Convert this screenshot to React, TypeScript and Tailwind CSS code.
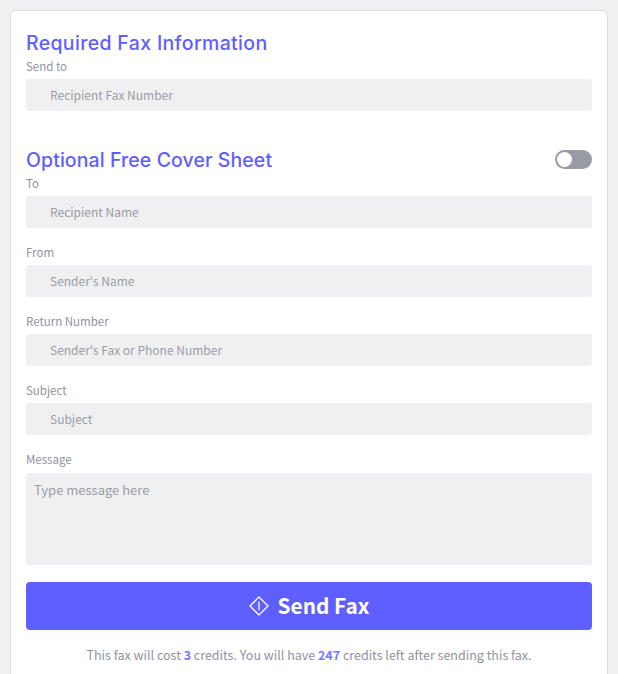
import React from "react";

const body = "font-['Noto_Sans_CJK_SC','Liberation_Sans',sans-serif]";

function Field({ label, placeholder }: { label: string; placeholder: string }) {
  return (
    <div className="flex flex-col">
      <label className="h-5 mb-[2px] text-[11.5px] leading-[18px] text-[#92929d]">{label}</label>
      <input
        readOnly
        placeholder={placeholder}
        className={`h-8 w-full rounded-[3px] bg-[#f0f0f2] pl-6 pr-3 pb-[2px] text-[12px] text-[#55555f] outline-none placeholder:text-[#9b9ba5] ${body}`}
      />
    </div>
  );
}

function Heading({ children, className }: { children: React.ReactNode; className?: string }) {
  return (
    <h2 className={`h-7 text-[19.5px] leading-7 font-medium text-[#5f5eff] font-['Inter',sans-serif] ${className ?? ""}`}>
      {children}
    </h2>
  );
}

export default function App() {
  return (
    <div className={`h-[674px] overflow-hidden bg-[#f0f0f2] px-[10px] pt-[10px] ${body}`}>
      <div className="h-[700px] rounded-t-[6px] border border-[#dcdce0] bg-white px-[15px] pt-[18px]">
        <Heading className="tracking-[0.33px]">Required Fax Information</Heading>
        <Field label="Send to" placeholder="Recipient Fax Number" />

        <div className="mt-[35px] flex items-center justify-between">
          <Heading className="tracking-[0.08px]">Optional Free Cover Sheet</Heading>
          <button
            type="button"
            aria-label="Toggle cover sheet"
            className="mb-[2px] flex h-[19px] w-[37px] items-center rounded-full bg-[#9a9aa5] pl-[2px]"
          >
            <span className="h-[15px] w-[15px] rounded-full bg-white" />
          </button>
        </div>

        <div className="flex flex-col gap-[15px]">
          <Field label="To" placeholder="Recipient Name" />
          <Field label="From" placeholder="Sender's Name" />
          <Field label="Return Number" placeholder="Sender's Fax or Phone Number" />
          <Field label="Subject" placeholder="Subject" />
          <div className="flex flex-col">
            <label className="h-5 mb-[3px] text-[11.5px] leading-[18px] text-[#92929d]">Message</label>
            <textarea
              readOnly
              placeholder="Type message here"
              className={`block h-[92px] w-full resize-none rounded-[3px] bg-[#f0f0f2] px-2 py-[7px] text-[13px] leading-5 outline-none placeholder:text-[#9b9ba5] ${body}`}
            />
          </div>
        </div>

        <button
          type="button"
          className="mt-[17px] flex h-12 w-full items-center justify-center gap-[9px] rounded-[4px] bg-[#5f5eff] text-[20.8px] font-semibold text-white"
        >
          <svg width="20" height="20" viewBox="0 0 20 20" fill="none" stroke="currentColor" strokeWidth="1.3" strokeLinejoin="round">
            <path d="M10 1 19 10 10 19 1 10Z" />
            <path d="M10 5.8v8.4" />
          </svg>
          <span className="mb-[1px]">Send Fax</span>
        </button>

        <p className="mt-[15px] text-center text-[12.5px] leading-5 text-[#92929d]">
          This fax will cost <b className="font-semibold text-[#7a79ff]">3</b> credits. You will have{" "}
          <b className="font-semibold text-[#7a79ff]">247</b> credits left after sending this fax.
        </p>
      </div>
    </div>
  );
}
